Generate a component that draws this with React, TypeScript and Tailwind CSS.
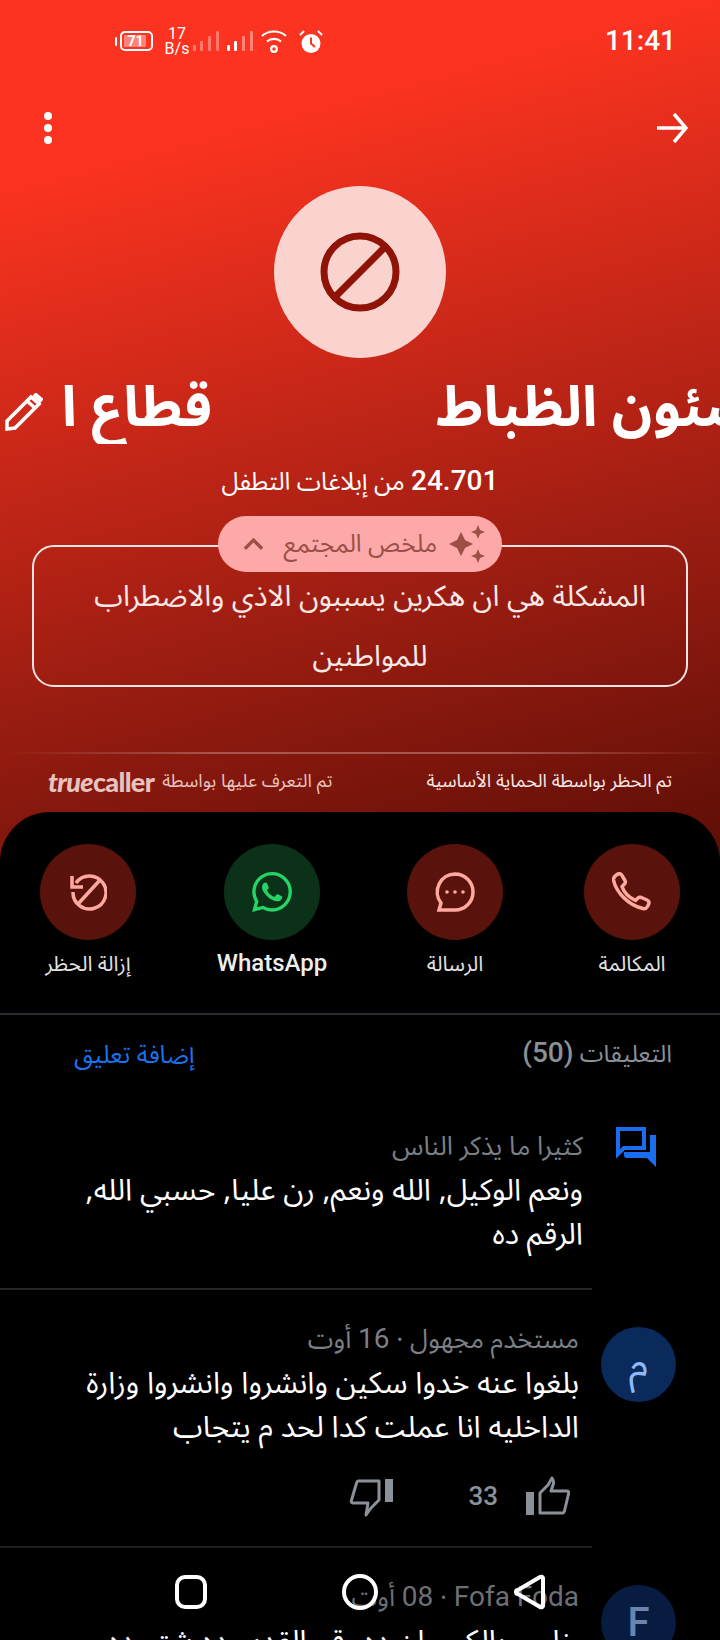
import React from 'react';

const ar = 'font-["Noto_Sans_Arabic","Noto_Naskh_Arabic","Noto_Sans","DejaVu_Sans",sans-serif]';

const StatusIcons = () => (
  <div className="flex items-center text-white">
    <div className="relative flex h-[24px] w-[38px] items-center justify-center">
      <svg className="absolute left-0 top-0" width="38" height="24" viewBox="0 0 38 24" fill="none">
        <rect x="0" y="8" width="2" height="9" rx="1" fill="#fff" />
        <rect x="6" y="3" width="31" height="18" rx="4" stroke="#fff" strokeWidth="2" />
        <rect x="9" y="6" width="22" height="12" rx="1" fill="#fff" fillOpacity="0.4" />
      </svg>
      <span className='relative ml-[3px] font-["Roboto",sans-serif] text-[14px] font-bold leading-none'>71</span>
    </div>
    <div className='ml-[11px] flex w-[26px] flex-col items-center font-["Roboto",sans-serif] text-[16px] leading-[15px]'>
      <span>17</span>
      <span>B/s</span>
    </div>
    <svg className="ml-[3px]" width="26" height="22" viewBox="0 0 26 22" fill="#fff" fillOpacity="0.35">
      <rect x="0" y="15" width="3" height="6" rx="1" />
      <rect x="7" y="11" width="3" height="10" rx="1" />
      <rect x="15" y="6" width="3" height="15" rx="1" />
      <rect x="23" y="1" width="3" height="20" rx="1" />
    </svg>
    <svg className="ml-[8px]" width="26" height="22" viewBox="0 0 26 22" fill="#fff">
      <rect x="0" y="15" width="3" height="6" rx="1" />
      <rect x="7" y="11" width="3" height="10" rx="1" />
      <rect x="15" y="6" width="3" height="15" rx="1" fillOpacity="0.4" />
      <rect x="23" y="1" width="3" height="20" rx="1" fillOpacity="0.4" />
    </svg>
    <svg className="ml-[8px]" width="26" height="25" viewBox="0 0 26 25" fill="none" stroke="#fff" strokeWidth="2.200">
      <path d="M1 7C7.500 1 18.500 1 25 7" />
      <path d="M6 12.500c4-3.500 10-3.500 14 0" />
      <circle cx="13" cy="20" r="2.800" />
    </svg>
    <svg className="ml-[12px]" width="24" height="25" viewBox="0 0 24 25" fill="none">
      <circle cx="12" cy="14.500" r="9.500" fill="#fff" />
      <path d="M12 8.500v6l4 3.500" stroke="#fb3320" strokeWidth="2" />
      <path d="M1 6l4-4M23 6l-4-4" stroke="#fff" strokeWidth="2" />
    </svg>
  </div>
);

const ActionButton = ({ label, bg, latin, className, children }: { label: string; bg: string; latin?: boolean; className?: string; children: React.ReactNode }) => (
  <div className={`flex w-[130px] flex-col items-center ${className || ''}`}>
    <div className={`flex h-24 w-24 items-center justify-center rounded-full ${bg}`}>{children}</div>
    <span className={latin ? 'mt-[8px] font-["Roboto",sans-serif] text-[24px] font-medium leading-[30px] text-[#eeeeee]' : `mt-[9px] text-[21px] leading-[30px] text-[#e2e2e2] ${ar}`}>
      {label}
    </span>
  </div>
);

const ThumbUp = () => (
  <svg className="self-start" width="44" height="40" viewBox="0 0 44 40" fill="none">
    <rect x="0" y="17" width="8" height="23" fill="#8b9199" />
    <path d="M14 38V18l8-8 4-7c2 3 2 5 1 7l-2 6h16c1.500 0 2 1 1.600 2.500l-4 17c-.3 1-1 2.500-2 2.500H14Z" stroke="#8b9199" strokeWidth="3" strokeLinejoin="round" />
  </svg>
);

const ThumbDown = () => (
  <svg className="self-end" width="44" height="39" viewBox="0 0 44 39" fill="none">
    <rect x="36" y="0" width="8" height="23" fill="#8b9199" />
    <path d="M30 2v19l-8 8-5 7 2-12H4c-1.500 0-2-1-1.600-2.500l5-17c.3-1 1-2.500 2-2.500H30Z" stroke="#8b9199" strokeWidth="3" strokeLinejoin="round" />
  </svg>
);

const App: React.FC = () => {
  return (
    <div dir="rtl" className={`relative h-[1640px] w-[720px] overflow-hidden bg-black ${ar}`}>
      <div className="h-[860px] bg-[linear-gradient(165deg,#fb3320_18%,#5c0e07_100%)]">
        {/* status bar */}
        <div dir="ltr" className="flex h-[82px] items-center justify-between pl-[115px] pr-[44px]">
          <StatusIcons />
          <span className='font-["Roboto",sans-serif] text-[28px] font-medium text-white'>11:41</span>
        </div>

        {/* top actions */}
        <div className="mt-[18px] flex h-[50px] items-center justify-between pl-[44px] pr-[32px] pt-[6px]">
          <svg width="32" height="32" viewBox="0 0 32 32" fill="none" stroke="#fff" strokeWidth="3.500">
            <path d="M1 16h29M18 2l12 14-12 14" />
          </svg>
          <div className="flex flex-col gap-[4px]">
            <span className="h-2 w-2 rounded-full bg-white" />
            <span className="h-2 w-2 rounded-full bg-white" />
            <span className="h-2 w-2 rounded-full bg-white" />
          </div>
        </div>

        <div className="mt-[36px] flex justify-center">
          <div className="flex h-[172px] w-[172px] items-center justify-center rounded-full bg-[#fbd3ce]">
            <svg width="80" height="80" viewBox="0 0 80 80" fill="none" stroke="#8f1407" strokeWidth="7">
              <circle cx="40" cy="40" r="36" />
              <path d="M15 65 65 15" />
            </svg>
          </div>
        </div>

        {/* title, cut by the marquee */}
        <div dir="ltr" className="mt-[14px] flex h-[72px] items-center overflow-hidden whitespace-nowrap text-[56px] font-bold leading-[72px] text-white">
          <svg className="ml-[5px] mt-[8px] shrink-0" width="38" height="38" viewBox="0 0 38 38" fill="none" stroke="#fff" strokeWidth="3.500">
            <path d="M2 28 26 4l8 7-24 24-8 1v-8Z" />
            <path d="M22 8l8 7" />
            <path d="M29 1l8 7" strokeWidth="5" />
          </svg>
          <span dir="rtl" className="ml-[17px] w-[152px] shrink-0">قطاع ا</span>
          <span dir="rtl" className="ml-[224px] shrink-0">شئون الظباط</span>
        </div>

        <p className="mt-[20px] text-center text-[24.500px] leading-[36px] text-white">
          <span className='font-["Roboto",sans-serif] text-[28px] font-medium leading-none'>24.701</span> من إبلاغات التطفل
        </p>

        {/* community summary */}
        <div className="relative mx-[32px] mt-[45px]">
          <div className="absolute left-1/2 top-[-29px] flex h-14 w-[284px] -translate-x-1/2 items-center rounded-full bg-[#fea9a9] pr-[17px] text-[#9c4f45]">
            <svg className="shrink-0" width="38" height="40" viewBox="0 0 38 40" fill="currentColor">
              <path d="M14 8l4 8 8 4-8 4-4 8-4-8-8-4 8-4 4-8Z" />
              <path d="M31 1l2 5 5 2-5 2-2 5-2-5-5-2 5-2 2-5Z" />
              <path d="M31 25l2 5 5 2-5 2-2 5-2-5-5-2 5-2 2-5Z" />
            </svg>
            <span className="mr-[10px] whitespace-nowrap text-[24.500px]">ملخص المجتمع</span>
            <svg className="mr-[19px] shrink-0" width="21" height="14" viewBox="0 0 22 14" fill="none" stroke="currentColor" strokeWidth="3.500">
              <path d="M2 12l9-9 9 9" />
            </svg>
          </div>
          <div className="h-[142px] rounded-[22px] border-2 border-[#f3e3e3] pl-[52px] pr-[32px] pt-[20px] text-center text-[29px] leading-[60px] text-[#f7e9e7]">
            <p>المشكلة هي ان هكرين يسببون الاذي والاضطراب للمواطنين</p>
          </div>
        </div>

        <div className="mt-[65px] h-[2px] bg-[linear-gradient(90deg,transparent,#a5564e_30%,#a5564e_70%,transparent)]" />

        <div className="flex items-center justify-between pl-[48px] pr-[48px] pt-[14px] text-[18.300px]">
          <span className="text-[#f7e9e7]">تم الحظر بواسطة الحماية الأساسية</span>
          <div className="flex items-center gap-2 text-[#e6c3be]">
            <span>تم التعرف عليها بواسطة</span>
            <span dir="ltr" className='font-["Lato",sans-serif] text-[27px] font-black leading-none tracking-tight'>
              <span className="italic">true</span>caller
            </span>
          </div>
        </div>
      </div>

      {/* bottom sheet */}
      <div className="-mt-[48px] rounded-t-[50px] bg-black">
        <div className="flex pr-[23px] pt-[32px]">
          <ActionButton label="المكالمة" bg="bg-[#5a130c]">
            <svg width="40" height="40" viewBox="0 0 40 40" fill="none" stroke="#fea9a0" strokeWidth="3.500" strokeLinejoin="round">
              <path d="M5 2.500c2-1.500 4-1 5 1l3 5c.7 1.500.5 2.500-.5 3.500l-2.500 2.500c2 6 7 11 13.500 14l2.500-2.500c1-1 2-1 3.500-.5l5.500 2.500c2 1 2.500 2.500 1.500 4.500l-1 2c-1 1.800-2.500 2.500-4.500 2C16 33 4 20 1.500 8c-.3-2 1-4 3.500-5.500Z" />
            </svg>
          </ActionButton>
          <ActionButton label="الرسالة" bg="bg-[#5a130c]" className="mr-[47px]">
            <svg width="40" height="40" viewBox="0 0 40 40" fill="none">
              <path d="M20 2a18 18 0 0 1 0 36H4l2-7A18 18 0 0 1 20 2Z" stroke="#fea9a0" strokeWidth="3.500" />
              <circle cx="12" cy="20" r="1.800" fill="#fea9a0" />
              <circle cx="20" cy="20" r="1.800" fill="#fea9a0" />
              <circle cx="28" cy="20" r="1.800" fill="#fea9a0" />
            </svg>
          </ActionButton>
          <ActionButton label="WhatsApp" bg="bg-[#0b3219]" latin className="mr-[53px]">
            <svg width="40" height="40" viewBox="0 0 24 24" fill="#25d366">
              <path d="M17.472 14.382c-.297-.149-1.758-.867-2.030-.967-.273-.099-.471-.148-.670.150-.197.297-.767.966-.940 1.164-.173.199-.347.223-.644.075-.297-.150-1.255-.463-2.390-1.475-.883-.788-1.480-1.761-1.653-2.059-.173-.297-.018-.458.130-.606.134-.133.298-.347.446-.520.149-.174.198-.298.298-.497.099-.198.050-.371-.025-.520-.075-.149-.669-1.612-.916-2.207-.242-.579-.487-.500-.669-.510-.173-.008-.371-.010-.570-.010-.198 0-.520.074-.792.372-.272.297-1.040 1.016-1.040 2.479 0 1.462 1.065 2.875 1.213 3.074.149.198 2.096 3.200 5.077 4.487.709.306 1.262.489 1.694.625.712.227 1.360.195 1.871.118.571-.085 1.758-.719 2.006-1.413.248-.694.248-1.289.173-1.413-.074-.124-.272-.198-.570-.347m-5.421 7.403h-.004a9.870 9.870 0 01-5.031-1.378l-.361-.214-3.741.982.998-3.648-.235-.374a9.860 9.860 0 01-1.510-5.260c.001-5.450 4.436-9.884 9.888-9.884 2.640 0 5.122 1.030 6.988 2.898a9.825 9.825 0 012.893 6.994c-.003 5.450-4.437 9.884-9.885 9.884m8.413-18.297A11.815 11.815 0 0012.050 0C5.495 0 .160 5.335.157 11.892c0 2.096.547 4.142 1.588 5.945L.057 24l6.305-1.654a11.882 11.882 0 005.683 1.448h.005c6.554 0 11.890-5.335 11.893-11.893a11.821 11.821 0 00-3.480-8.413Z" />
            </svg>
          </ActionButton>
          <ActionButton label="إزالة الحظر" bg="bg-[#5a130c]" className="mr-[54px]">
            <svg width="38" height="38" viewBox="0 0 38 38" fill="none" stroke="#fea9a0" strokeWidth="3.500">
              <path d="M7 10a16.500 16.500 0 1 1-3 9" />
              <path d="M9 31 31 7" />
              <path d="M3 3v11h11" />
            </svg>
          </ActionButton>
        </div>

        <div className="mt-[34px] h-[2px] bg-[#2a2a30]" />

        <div className="flex items-center justify-between pl-[74px] pr-[48px] pt-[20px]">
          <span className="text-[24px] leading-[40px] text-[#8b9199]">
            التعليقات <span className='font-["Roboto",sans-serif] text-[28px] font-medium leading-none'>(50)</span>
          </span>
          <span className="text-[24.500px] leading-[40px] text-[#1a73f0]">إضافة تعليق</span>
        </div>

        {/* comment 1 */}
        <div className="mr-[64px] mt-[50px] flex gap-[33px] pb-[31px]">
          <svg className="mt-[2px] shrink-0" width="40" height="40" viewBox="0 0 40 40" fill="none">
            <path d="M34 8h6v32l-9-9H11a3 3 0 0 1-3-3v-3h26V8Z" fill="#1a6cf0" />
            <path d="M2 27V2h26v19H8l-6 6Z" stroke="#1a6cf0" strokeWidth="4" />
          </svg>
          <div className="pl-[60px]">
            <p className="text-[26px] leading-[44px] text-[#7b7f86]">كثيرا ما يذكر الناس</p>
            <p className="text-[30px] leading-[44px] text-white">ونعم الوكيل, الله ونعم, رن عليا, حسبي الله, الرقم ده</p>
          </div>
        </div>
        <div className="mr-[128px] h-[2px] w-[592px] bg-[#26262a]" />

        {/* comment 2 */}
        <div className="mr-[44px] flex gap-[22px] pt-[37px]">
          <div className="flex h-[75px] w-[75px] shrink-0 items-center justify-center rounded-full bg-[#0a2a5c] text-[40px] text-[#8fb8f5]">م</div>
          <div className="-mt-[9px] pl-[60px]">
            <p className="text-[26px] leading-[44px] text-[#7b7f86]">
              مستخدم مجهول · <span className='font-["Roboto",sans-serif] text-[28px] leading-none'>16</span> أوت
            </p>
            <p className="text-[30px] leading-[44px] text-white">بلغوا عنه خدوا سكين وانشروا وانشروا وزارة الداخليه انا عملت كدا لحد م يتجاب</p>
            <div className="mr-[9px] mt-[25px] flex h-[43px] items-center">
              <ThumbUp />
              <span className='mr-[28px] font-["Roboto",sans-serif] text-[26px] font-medium text-[#8b9199]'>33</span>
              <span className="mr-[75px] flex h-full"><ThumbDown /></span>
            </div>
          </div>
        </div>
        <div className="mr-[128px] mt-[28px] h-[2px] w-[592px] bg-[#1c1c20]" />

        {/* comment 3 */}
        <div className="mr-[44px] flex gap-[22px] pt-[37px]">
          <div className="flex h-[75px] w-[75px] shrink-0 items-center justify-center rounded-full bg-[#071c40] font-['Roboto',sans-serif] text-[40px] font-medium text-[#6a84ad]">F</div>
          <div className="-mt-[9px] pl-[60px]">
            <p className="text-[26px] leading-[44px] text-[#6c7076]">
              <span dir="ltr" className='font-["Roboto",sans-serif] text-[28px] leading-none'>Fofa Foda</span> · <span className='font-["Roboto",sans-serif] text-[28px] leading-none'>08</span> أوت
            </p>
            <p className="text-[30px] leading-[44px] text-white">خاص بالكبير ان ده رقم القديم ده شتم ده لقاء</p>
          </div>
        </div>
      </div>

      {/* nav bar overlay */}
      <svg className="absolute bottom-[30px] left-[172px]" width="380" height="36" viewBox="0 0 380 36" fill="none" stroke="#fff" strokeWidth="4">
        <rect x="5" y="3" width="28" height="30" rx="8" />
        <ellipse cx="188" cy="18" rx="16" ry="16" />
        <path d="M371 4v28a2 2 0 0 1-3 1L346 20a2 2 0 0 1 0-4L368 3a2 2 0 0 1 3 1Z" />
      </svg>
    </div>
  );
};

export default App;
